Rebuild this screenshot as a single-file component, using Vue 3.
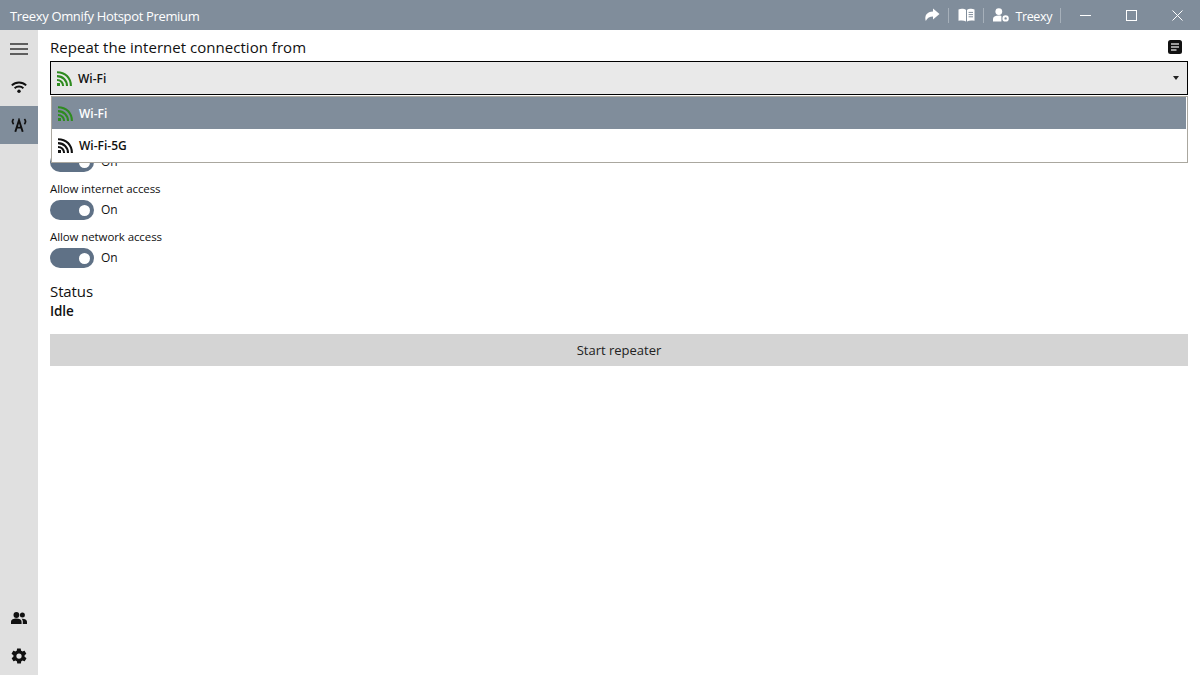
<template>
  <div class="window">
    <header class="titlebar">
      <span class="app-title">Treexy Omnify Hotspot Premium</span>
      <div class="title-actions">
        <svg viewBox="0 0 16 14" width="16" height="14"><path d="M9 .5 15.5 6 9 11.5V8.4C5.8 8.4 3.2 9.6 1.8 13 .2 7.6 3 3.8 9 3.6z" fill="#fff"/></svg>
        <i class="sep"></i>
        <svg viewBox="0 0 17 14" width="17" height="14">
          <path d="M.5 1.4C3 .6 6 .6 8 2V13.4C6 12.2 3 12.2 .5 12.8z" fill="#fff"/>
          <path d="M9 2C11 .6 14 .6 16.5 1.4V12.8C14 12.2 11 12.2 9 13.4z" fill="#fff"/>
          <path d="M10.6 4.4h4.4M10.6 6.6h4.4M10.6 8.8h4.4" stroke="#808d9b" stroke-width="1"/>
        </svg>
        <i class="sep"></i>
        <svg viewBox="0 0 16 14" width="16" height="14">
          <circle cx="5.8" cy="3.6" r="3.4" fill="#fff"/>
          <path d="M0 13.5V11C0 8.8 2 7.6 5.8 7.6c1 0 1.8.1 2.6.3V13.5z" fill="#fff"/>
          <circle cx="12.6" cy="10.4" r="2.2" fill="none" stroke="#fff" stroke-width="2"/>
        </svg>
        <span class="user">Treexy</span>
        <i class="sep"></i>
      </div>
      <div class="window-buttons">
        <span class="win-btn"><i class="min"></i></span>
        <span class="win-btn"><i class="max"></i></span>
        <span class="win-btn">
          <svg viewBox="0 0 11 11" width="11" height="11"><path d="M.5.5l10 10M10.5.5l-10 10" stroke="#fff" stroke-width="1"/></svg>
        </span>
      </div>
    </header>

    <div class="body">
      <nav class="sidebar">
        <div class="nav-item">
          <svg viewBox="0 0 18 12" width="18" height="12"><path d="M0 1h18M0 6h18M0 11h18" stroke="#333" stroke-width="1.5"/></svg>
        </div>
        <div class="nav-item">
          <svg viewBox="0 0 16 12" width="16" height="12" fill="none" stroke="#111" stroke-width="1.9">
            <path d="M.8 4.4C4.8.6 11.2.6 15.2 4.4"/>
            <path d="M3.6 7.2C6 5 10 5 12.4 7.2"/>
            <circle cx="8" cy="10.2" r="1.7" fill="#111" stroke="none"/>
          </svg>
        </div>
        <div class="nav-item active">
          <svg viewBox="0 0 16 14" width="16" height="14" fill="none" stroke="#111" stroke-width="1.7">
            <path d="M2.6 1C1.2 2.6 1.2 4.6 2.6 6.2M13.4 1C14.8 2.6 14.8 4.6 13.4 6.2"/>
            <path d="M4.3 13.8 8 2.2 11.7 13.8M5.6 9.6h4.8" stroke-width="1.9"/>
          </svg>
        </div>
        <div class="nav-spacer"></div>
        <div class="nav-item">
          <svg viewBox="0 0 16 12" width="16" height="12" fill="#111">
            <circle cx="5.4" cy="3" r="2.9"/>
            <circle cx="11.4" cy="3" r="2.5"/>
            <path d="M0 12V9.8C0 7.6 2.6 6.6 5.4 6.6s5.2 1 5.2 3.2V12z"/>
            <path d="M11.8 12V9.6c0-1.2-.5-2.1-1.3-2.8 2.7-.3 5.5.7 5.5 2.9V12z"/>
          </svg>
        </div>
        <div class="nav-item">
          <svg viewBox="0 0 24 24" width="18" height="18" fill="#111">
            <path d="M19.4 13c0-.3.1-.7.1-1s0-.7-.1-1l2.1-1.6c.2-.2.2-.4.1-.6l-2-3.5c-.1-.2-.4-.3-.6-.2l-2.5 1c-.5-.4-1.1-.7-1.7-1l-.4-2.6c0-.3-.2-.5-.5-.5h-4c-.3 0-.5.2-.5.4l-.4 2.7c-.6.2-1.2.6-1.7 1l-2.5-1c-.2-.1-.5 0-.6.2l-2 3.5c-.1.2-.1.5.1.6L4.6 11c0 .3-.1.7-.1 1s0 .7.1 1l-2.1 1.6c-.2.2-.2.4-.1.6l2 3.5c.1.2.4.3.6.2l2.5-1c.5.4 1.1.7 1.7 1l.4 2.6c0 .3.2.5.5.5h4c.3 0 .5-.2.5-.4l.4-2.7c.6-.2 1.2-.6 1.7-1l2.5 1c.2.1.5 0 .6-.2l2-3.5c.1-.2.1-.5-.1-.6zM12 15.5a3.5 3.5 0 1 1 0-7 3.5 3.5 0 0 1 0 7z"/>
          </svg>
        </div>
      </nav>

      <main class="content">
        <div class="heading-row">
          <span class="heading">Repeat the internet connection from</span>
          <svg viewBox="0 0 14 14" width="14" height="14">
            <rect width="14" height="14" rx="2.5" fill="#111"/>
            <path d="M3 4h8M3 7h8M3 10h5.5" stroke="#ccc" stroke-width="1.6"/>
          </svg>
        </div>

        <div class="select-wrap">
          <div class="select">
            <svg class="signal" viewBox="0 0 15 15" width="15" height="15" fill="none" stroke="#2e8b1f" stroke-width="2.1">
              <path d="M0 1.2C8.2 1.2 13.9 7 13.9 15M0 5.1C5.8 5.1 10 9.4 10 15M0 9C3.6 9 6.1 11.6 6.1 15"/>
              <rect x="0" y="12" width="3" height="3" fill="#2e8b1f" stroke="none"/>
            </svg>
            <span class="select-text">Wi-Fi</span>
            <i class="caret"></i>
          </div>
          <ul class="menu">
            <li v-for="net in networks" :key="net.name" :class="{ selected: net.selected }">
              <svg class="signal" viewBox="0 0 15 15" width="15" height="15" fill="none" :stroke="net.color" stroke-width="2.1">
                <path d="M0 1.2C8.2 1.2 13.9 7 13.9 15M0 5.1C5.8 5.1 10 9.4 10 15M0 9C3.6 9 6.1 11.6 6.1 15"/>
                <rect x="0" y="12" width="3" height="3" :fill="net.color" stroke="none"/>
              </svg>
              <span>{{ net.name }}</span>
            </li>
          </ul>
        </div>

        <div class="options">
          <div v-for="(opt, i) in options" :key="i" class="option">
            <label class="option-label">{{ opt }}</label>
            <div class="toggle-row">
              <span class="toggle"><i></i></span>
              <span class="toggle-text">On</span>
            </div>
          </div>
        </div>

        <div class="status-title">Status</div>
        <div class="status-value">Idle</div>

        <button type="button" class="start-btn">Start repeater</button>
      </main>
    </div>
  </div>
</template>

<script setup>
const networks = [
  { name: 'Wi-Fi', color: '#2e8b1f', selected: true },
  { name: 'Wi-Fi-5G', color: '#111', selected: false }
]

// the first label sits behind the open dropdown in the reference
const options = ['', 'Allow internet access', 'Allow network access']
</script>

<style>
html, body {
  margin: 0;
  background: #fff;
}
</style>

<style scoped>
.window {
  width: 1200px;
  height: 675px;
  display: flex;
  flex-direction: column;
  overflow: hidden;
  font-family: "Open Sans", "Noto Sans", "Liberation Sans", sans-serif;
  color: #111;
}

.titlebar {
  height: 30px;
  flex: none;
  display: flex;
  align-items: center;
  background: #808d9b;
  color: #fff;
  padding-left: 10px;
}

.app-title {
  font-size: 13px;
  letter-spacing: -0.34px;
  flex: 1;
  padding-top: 2px;
}

.title-actions {
  display: flex;
  align-items: center;
}

.title-actions svg {
  display: block;
}

.sep {
  width: 1px;
  height: 15px;
  margin: 0 9px 0 8px;
  background: #a6b0ba;
}

.user {
  font-size: 12.5px;
  letter-spacing: -0.4px;
  margin-left: 7px;
  padding-top: 2px;
}

.window-buttons {
  display: flex;
  margin-left: -5px;
}

.win-btn {
  width: 45px;
  height: 30px;
  display: flex;
  align-items: center;
  justify-content: center;
}

.min {
  width: 11px;
  height: 1px;
  margin-right: 4px;
  background: #fff;
}

.max {
  width: 9px;
  height: 9px;
  margin-right: 2px;
  border: 1px solid #fff;
}

.body {
  flex: 1;
  display: flex;
  min-height: 0;
}

.sidebar {
  width: 38px;
  flex: none;
  display: flex;
  flex-direction: column;
  background: #e0e0e0;
}

.nav-item {
  height: 38px;
  display: flex;
  align-items: center;
  justify-content: center;
}

.nav-item.active {
  background: #808d9b;
}

.nav-spacer {
  flex: 1;
}

.content {
  flex: 1;
  padding: 0 12px;
  min-width: 0;
}

.heading-row {
  height: 31px;
  display: flex;
  align-items: center;
  justify-content: space-between;
  padding: 2px 6px 0 0;
  box-sizing: border-box;
}

.heading {
  font-size: 15px;
  letter-spacing: 0.03px;
}

.select-wrap {
  position: relative;
}

.select {
  height: 34px;
  box-sizing: border-box;
  border: 1px solid #000;
  background: #e9e9e9;
  display: flex;
  align-items: center;
  padding-left: 6px;
}

.select-text {
  margin-left: 6px;
  font-size: 12px;
  font-weight: 600;
}

.caret {
  margin-left: auto;
  margin-right: 8px;
  width: 0;
  height: 0;
  border-left: 3.5px solid transparent;
  border-right: 3.5px solid transparent;
  border-top: 4px solid #222;
}

.signal {
  flex: none;
}

.menu {
  position: absolute;
  left: 1px;
  right: 0;
  top: 35px;
  margin: 0;
  padding: 0 1px 1px 0;
  list-style: none;
  background: #fff;
  border: 1px solid #aaa79f;
}

.menu li {
  height: 32px;
  display: flex;
  align-items: center;
  gap: 6px;
  padding-left: 6px;
  font-size: 12px;
  font-weight: 600;
}

.menu li.selected {
  background: #808d9b;
  color: #fff;
}

.options {
  display: flex;
  flex-direction: column;
  gap: 6px;
  margin-top: 35px;
}

.option-label {
  display: block;
  height: 22px;
  line-height: 22px;
  font-size: 11.5px;
  letter-spacing: -0.1px;
}

.toggle-row {
  height: 20px;
  display: flex;
  align-items: center;
  gap: 7px;
}

.toggle {
  width: 44px;
  height: 20px;
  border-radius: 10px;
  background: #5f7186;
  display: flex;
  align-items: center;
  justify-content: flex-end;
  padding-right: 4px;
  box-sizing: border-box;
}

.toggle i {
  width: 11px;
  height: 11px;
  border-radius: 50%;
  background: #fff;
}

.toggle-text {
  font-size: 12px;
  padding-bottom: 2px;
}

.status-title {
  margin-top: 13px;
  font-size: 15px;
  line-height: 20px;
  letter-spacing: -0.1px;
}

.status-value {
  font-size: 13.5px;
  font-weight: 600;
  line-height: 20px;
  letter-spacing: -0.1px;
}

.start-btn {
  display: block;
  width: 100%;
  height: 32px;
  margin-top: 13px;
  border: none;
  padding: 0;
  background: #d4d4d4;
  color: #222;
  font-family: inherit;
  font-size: 13px;
}
</style>
